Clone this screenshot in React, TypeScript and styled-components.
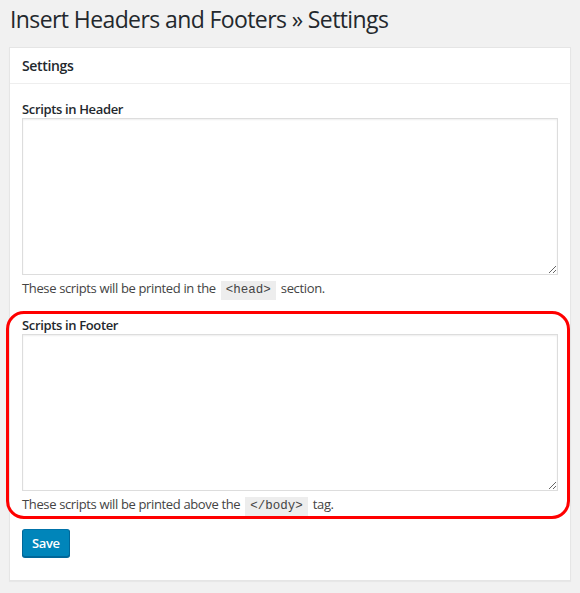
import React from "react";
import styled, { createGlobalStyle } from "styled-components";

const Global = createGlobalStyle`
  html, body { margin: 0; padding: 0; background: #f1f1f1; }
  body { font-family: "Open Sans", "Noto Sans", sans-serif; color: #444; font-size: 13px; }
`;

const Page = styled.div`
  padding: 0 9px;
  width: 580px;
  height: 593px;
  box-sizing: border-box;
  overflow: hidden;
`;

const Title = styled.h1`
  margin: 0;
  padding: 5px 0 0 1px;
  height: 47px;
  box-sizing: border-box;
  font-size: 23px;
  font-weight: 400;
  line-height: 29px;
  letter-spacing: -0.6px;
  color: #23282d;
`;

const Panel = styled.div`
  background: #fff;
  border: 1px solid #e5e5e5;
  box-shadow: 0 1px 1px rgba(0, 0, 0, 0.04);
`;

const PanelHeader = styled.h2`
  margin: 0;
  height: 35px;
  padding: 0 12px;
  display: flex;
  align-items: center;
  border-bottom: 1px solid #eee;
  font-size: 14px;
  font-weight: 600;
  letter-spacing: -0.35px;
  color: #23282d;
`;

const PanelBody = styled.div`
  padding: 17px 12px 23px;
  display: flex;
  flex-direction: column;
`;

const Field = styled.div<{ $highlight?: boolean }>`
  position: relative;
  display: flex;
  flex-direction: column;
  margin-bottom: ${(p) => (p.$highlight ? "13px" : "17px")};
  ${(p) =>
    p.$highlight &&
    `
    &::after {
      content: "";
      position: absolute;
      top: -6px;
      bottom: -3px;
      left: -16px;
      right: -12px;
      border: 3.5px solid #ff0000;
      border-radius: 18px;
      pointer-events: none;
    }
  `}
`;

const Label = styled.label`
  font-size: 13px;
  font-weight: 600;
  line-height: 17px;
  letter-spacing: -0.35px;
  color: #23282d;
`;

const TextArea = styled.textarea`
  display: block;
  box-sizing: border-box;
  width: 536px;
  height: 157px;
  margin: 0;
  border: 1px solid #ddd;
  box-shadow: inset 0 1px 2px rgba(0, 0, 0, 0.07);
  background: #fff;
  font-family: "Liberation Mono", monospace;
  resize: vertical;
  outline: none;
`;

const Description = styled.p`
  margin: 4px 0 0;
  font-size: 13px;
  line-height: 19px;
  letter-spacing: -0.36px;
  color: #444;
`;

const Code = styled.code`
  display: inline-block;
  background: rgba(0, 0, 0, 0.07);
  padding: 0 5px;
  margin: 0 2px;
  font-family: "Liberation Mono", "DejaVu Sans Mono", monospace;
  font-size: 12.5px;
  line-height: 19px;
  letter-spacing: 0;
  color: #444;
`;

const SaveButton = styled.button`
  align-self: flex-start;
  height: 28px;
  padding: 0 9px;
  background: #0085ba;
  border: 1px solid #0073aa;
  border-color: #0073aa #006799 #006799;
  border-radius: 3px;
  box-shadow: 0 1px 0 #006799;
  color: #fff;
  font-family: "Open Sans", "Noto Sans", sans-serif;
  font-size: 13px;
  font-weight: 600;
  line-height: 26px;
  letter-spacing: -0.35px;
  cursor: pointer;
`;

export default function App() {
  return (
    <Page>
      <Global />
      <Title>Insert Headers and Footers » Settings</Title>
      <Panel>
        <PanelHeader>Settings</PanelHeader>
        <PanelBody>
          <Field>
            <Label htmlFor="ihaf_insert_header">Scripts in Header</Label>
            <TextArea id="ihaf_insert_header" />
            <Description>
              These scripts will be printed in the <Code>&lt;head&gt;</Code> section.
            </Description>
          </Field>
          <Field $highlight>
            <Label htmlFor="ihaf_insert_footer">Scripts in Footer</Label>
            <TextArea id="ihaf_insert_footer" />
            <Description>
              These scripts will be printed above the <Code>&lt;/body&gt;</Code> tag.
            </Description>
          </Field>
          <SaveButton>Save</SaveButton>
        </PanelBody>
      </Panel>
    </Page>
  );
}
